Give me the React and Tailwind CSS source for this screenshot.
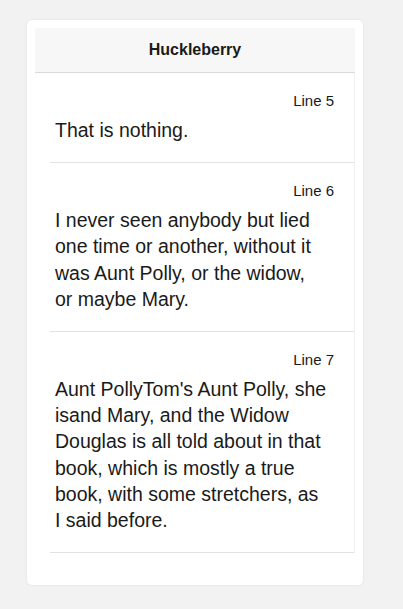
import React from 'react';

// each entry is a visual line of the passage, as wrapped in the reference
const lines = [
  { id: 5, text: ['That is nothing.'] },
  {
    id: 6,
    text: [
      'I never seen anybody but lied',
      'one time or another, without it',
      'was Aunt Polly, or the widow,',
      'or maybe Mary.'
    ]
  },
  {
    id: 7,
    text: [
      "Aunt PollyTom's Aunt Polly, she",
      'isand Mary, and the Widow',
      'Douglas is all told about in that',
      'book, which is mostly a true',
      'book, with some stretchers, as',
      'I said before.'
    ]
  }
];

const App = () => {
  return (
    <div className="min-h-screen bg-[#f2f2f2] px-[27px] pt-5 pb-6 font-['Liberation_Sans',Arial,sans-serif] text-[#1a1a1a]">
      <div className="w-[336px] rounded-[5px] bg-white p-2 pb-8 shadow-[0_0_3px_rgba(0,0,0,0.08)]">
        {/* Header */}
        <div className="flex h-[45px] items-center justify-center border-b border-[#d9d9d9] bg-[#f7f7f7] text-[16px] font-bold">
          Huckleberry
        </div>

        {/* Lines */}
        <ul className="border-r border-[#f1f1f1]">
          {lines.map((line) => (
            <li
              key={line.id}
              className="ml-[15px] border-b border-[#e2e2e2] pt-[18px] pb-[19px] pl-[5px] pr-[20px]"
            >
              <div className="text-right text-[15px] leading-5">Line {line.id}</div>
              <p className="mt-[6px] text-[19.5px] leading-[26.2px]">
                {line.text.map((t, i) => (
                  <React.Fragment key={i}>
                    {i > 0 && <br />}
                    {t}
                  </React.Fragment>
                ))}
              </p>
            </li>
          ))}
        </ul>
      </div>
    </div>
  );
};

export default App;
